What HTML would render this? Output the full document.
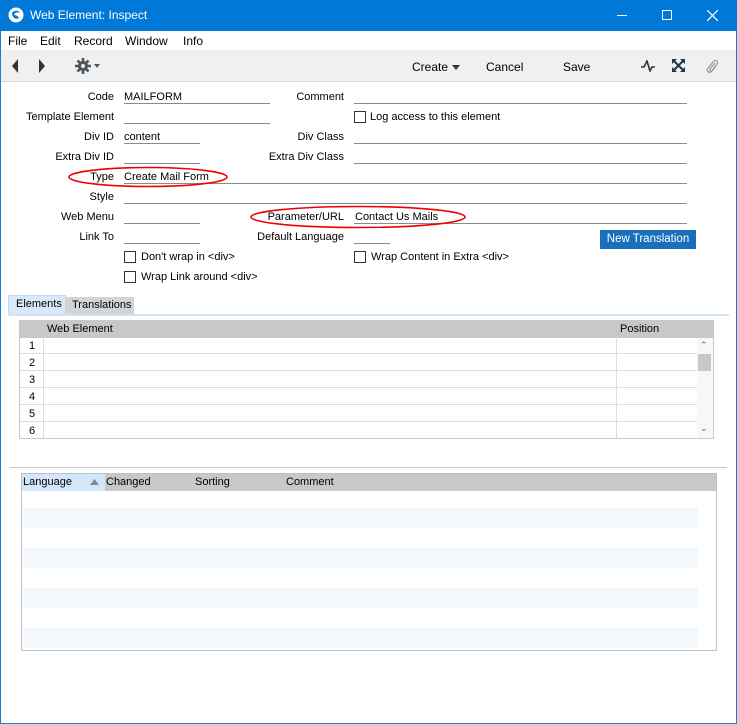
<!DOCTYPE html><html><head><style>
*{margin:0;padding:0;box-sizing:border-box}
body{width:737px;height:724px;position:relative;background:#fff;font-family:"Liberation Sans",sans-serif;font-size:11px;color:#000;overflow:hidden}
.a{position:absolute;white-space:nowrap}
.l{position:absolute;text-align:right;white-space:nowrap}
.u{position:absolute;height:1px;background:#8a8a8a}
.cb{position:absolute;width:12px;height:12px;border:1px solid #333;background:#fff}
</style></head><body>
<div class="a" style="left:0;top:0;width:737px;height:724px;border:1px solid #1a7fd4;border-top:none"></div>
<div class="a" style="left:0;top:0;width:737px;height:31px;background:#0078d7;color:#fff;font-size:12px">
<svg class="a" style="left:8px;top:7px" width="16" height="16" viewBox="0 0 16 16"><circle cx="8" cy="8" r="7.5" fill="#fff"/><path d="M4 6c2-3 7-3 8 0c-2-1-5-1-6 2c2 0 4 1 5 3c-3 2-7 0-7-5z" fill="#0078d7"/></svg>
<span class="a" style="left:30px;top:8px">Web Element: Inspect</span>
<div class="a" style="left:617px;top:15px;width:10px;height:1px;background:#fff"></div>
<div class="a" style="left:662px;top:10px;width:10px;height:10px;border:1px solid #fff"></div>
<svg class="a" style="left:707px;top:10px" width="11" height="11"><path d="M0 0L11 11M11 0L0 11" stroke="#fff" stroke-width="1.2"/></svg>
</div>
<div class="a" style="left:1px;top:31px;width:735px;height:19px;background:#fff;font-size:12px">
<span class="a" style="left:7px;top:3px">File</span><span class="a" style="left:39px;top:3px">Edit</span><span class="a" style="left:73px;top:3px">Record</span><span class="a" style="left:124px;top:3px">Window</span><span class="a" style="left:182px;top:3px">Info</span></div>
<div class="a" style="left:1px;top:50px;width:735px;height:32px;background:#f0f0f0;border-bottom:1px solid #dcdcdc;font-size:12px">
<svg class="a" style="left:10px;top:9px" width="40" height="14"><path d="M7 0L1 7L7 14Z" fill="#333"/><path d="M28 0L34 7L28 14Z" fill="#333"/></svg>
<svg class="a" style="left:74px;top:8px" width="30" height="16"><path d="M8 0v16M0 8h16M2.5 2.5l11 11M13.5 2.5l-11 11" stroke="#4a5560" stroke-width="2.6"/><circle cx="8" cy="8" r="5" fill="#4a5560"/><circle cx="8" cy="8" r="2" fill="#f0f0f0"/><path d="M19 6h6l-3 4z" fill="#4a5560"/></svg>
<span class="a" style="left:411px;top:10px">Create</span><svg class="a" style="left:451px;top:15px" width="8" height="5"><path d="M0 0h8L4 5z" fill="#333"/></svg>
<span class="a" style="left:485px;top:10px">Cancel</span><span class="a" style="left:562px;top:10px">Save</span>
<svg class="a" style="left:640px;top:10px" width="14" height="12"><path d="M0 7h3l3-6l3 10l2-4h3" stroke="#333" stroke-width="1.6" fill="none"/></svg>
<svg class="a" style="left:671px;top:9px" width="13" height="13"><path d="M1 1l11 11M12 1L1 12" stroke="#1e3550" stroke-width="2"/><path d="M0 0h5L0 5zM13 0v5L8 0zM0 13v-5l5 5zM13 13h-5l5-5z" fill="#1e3550"/></svg>
<svg class="a" style="left:705px;top:8px" width="12" height="16"><path d="M9 5l-5 6c-1 1.5 1 3 2 1.6l5-6.6c2-2.6-1.5-5-3.5-2.5L2 10c-2.5 3 1.5 6 4 3l4-5" stroke="#999" stroke-width="1.2" fill="none"/></svg>
</div>
<div class="l" style="right:623px;top:91px">Code</div><div class="a" style="left:124px;top:91px">MAILFORM</div><div class="u" style="left:124px;top:103px;width:146px"></div>
<div class="l" style="right:623px;top:111px">Template Element</div><div class="u" style="left:124px;top:123px;width:146px"></div>
<div class="l" style="right:623px;top:131px">Div ID</div><div class="a" style="left:124px;top:131px">content</div><div class="u" style="left:124px;top:143px;width:76px"></div>
<div class="l" style="right:623px;top:151px">Extra Div ID</div><div class="u" style="left:124px;top:163px;width:76px"></div>
<div class="l" style="right:623px;top:171px">Type</div><div class="a" style="left:124px;top:171px">Create Mail Form</div><div class="u" style="left:124px;top:183px;width:563px"></div>
<div class="l" style="right:623px;top:191px">Style</div><div class="u" style="left:124px;top:203px;width:563px"></div>
<div class="l" style="right:623px;top:211px">Web Menu</div><div class="u" style="left:124px;top:223px;width:76px"></div>
<div class="l" style="right:623px;top:231px">Link To</div><div class="u" style="left:124px;top:243px;width:76px"></div>
<div class="cb" style="left:124px;top:251px"></div><div class="a" style="left:141px;top:251px">Don't wrap in &lt;div&gt;</div>
<div class="cb" style="left:124px;top:271px"></div><div class="a" style="left:141px;top:271px">Wrap Link around &lt;div&gt;</div>
<div class="l" style="right:393px;top:91px">Comment</div><div class="u" style="left:354px;top:103px;width:333px"></div>
<div class="cb" style="left:354px;top:111px"></div><div class="a" style="left:370px;top:111px">Log access to this element</div>
<div class="l" style="right:393px;top:131px">Div Class</div><div class="u" style="left:354px;top:143px;width:333px"></div>
<div class="l" style="right:393px;top:151px">Extra Div Class</div><div class="u" style="left:354px;top:163px;width:333px"></div>
<div class="l" style="right:393px;top:211px">Parameter/URL</div><div class="a" style="left:355px;top:211px">Contact Us Mails</div><div class="u" style="left:354px;top:223px;width:333px"></div>
<div class="l" style="right:393px;top:231px">Default Language</div><div class="u" style="left:354px;top:243px;width:36px"></div>
<div class="cb" style="left:354px;top:251px"></div><div class="a" style="left:371px;top:251px">Wrap Content in Extra &lt;div&gt;</div>
<div class="a" style="left:600px;top:230px;width:96px;height:19px;background:#1a6fbd;color:#fff;text-align:center;line-height:19px;font-size:11.5px">New Translation</div>
<svg class="a" style="left:0;top:0" width="737" height="300"><ellipse cx="148" cy="177" rx="79" ry="9.5" fill="none" stroke="#e00" stroke-width="1.6"/><ellipse cx="358" cy="217" rx="107" ry="10.5" fill="none" stroke="#e00" stroke-width="1.6"/></svg>
<div class="a" style="left:8px;top:295px;width:58px;height:20px;background:#d9e8f7;border:1px solid #c0d8ef;padding:2px 0 0 7px">Elements</div>
<div class="a" style="left:66px;top:297px;width:68px;height:17px;background:#d4d4d4;padding:2px 0 0 6px">Translations</div>
<div class="a" style="left:8px;top:314px;width:721px;height:2px;background:#cfe3f5"></div>
<div class="a" style="left:19px;top:320px;width:695px;height:119px;border:1px solid #c8c8c8;background:#fff">
<div class="a" style="left:0;top:0;width:693px;height:17px;background:#c8c8c8"></div>
<span class="a" style="left:27px;top:2px">Web Element</span><span class="a" style="left:600px;top:2px">Position</span>
<div class="a" style="left:677px;top:17px;width:16px;height:100px;background:#f7f7f7"></div>
<div class="a" style="left:678px;top:33px;width:13px;height:17px;background:#c8c8c8"></div>
<span class="a" style="left:680px;top:19px;font-size:9px;color:#666">&#8963;</span>
<span class="a" style="left:680px;top:102px;font-size:9px;color:#666">&#8964;</span>
</div>
<div class="a" style="left:20px;top:337px">
<div class="a" style="left:23px;top:0;width:1px;height:101px;background:#ddd"></div>
<div class="a" style="left:596px;top:0;width:1px;height:101px;background:#ddd"></div>
<div class="a" style="left:0;top:16px;width:677px;height:1px;background:#ddd"></div>
<div class="a" style="left:0;top:33px;width:677px;height:1px;background:#ddd"></div>
<div class="a" style="left:0;top:50px;width:677px;height:1px;background:#ddd"></div>
<div class="a" style="left:0;top:67px;width:677px;height:1px;background:#ddd"></div>
<div class="a" style="left:0;top:84px;width:677px;height:1px;background:#ddd"></div>
<span class="a" style="left:9px;top:3px">1</span><span class="a" style="left:9px;top:20px">2</span><span class="a" style="left:9px;top:37px">3</span><span class="a" style="left:9px;top:54px">4</span><span class="a" style="left:9px;top:71px">5</span><span class="a" style="left:9px;top:88px">6</span>
</div>
<div class="a" style="left:10px;top:467px;width:717px;height:1px;background:#c8c8c8"></div>
<div class="a" style="left:21px;top:473px;width:696px;height:178px;border:1px solid #c0c0c0;background:#fff">
<div class="a" style="left:0;top:0;width:694px;height:17px;background:#c8c8c8"></div>
<div class="a" style="left:0;top:0;width:83px;height:17px;background:#d4e7fa"></div>
<span class="a" style="left:1px;top:2px">Language</span>
<svg class="a" style="left:68px;top:5px" width="9" height="6"><path d="M0 6L4.5 0L9 6z" fill="#888"/></svg>
<span class="a" style="left:84px;top:2px">Changed</span><span class="a" style="left:173px;top:2px">Sorting</span><span class="a" style="left:264px;top:2px">Comment</span>
<div class="a" style="left:1px;top:34px;width:675px;height:20px;background:#f3f8fd"></div>
<div class="a" style="left:1px;top:74px;width:675px;height:20px;background:#f3f8fd"></div>
<div class="a" style="left:1px;top:114px;width:675px;height:20px;background:#f3f8fd"></div>
<div class="a" style="left:1px;top:154px;width:675px;height:20px;background:#f3f8fd"></div>
</div>
</body></html>
